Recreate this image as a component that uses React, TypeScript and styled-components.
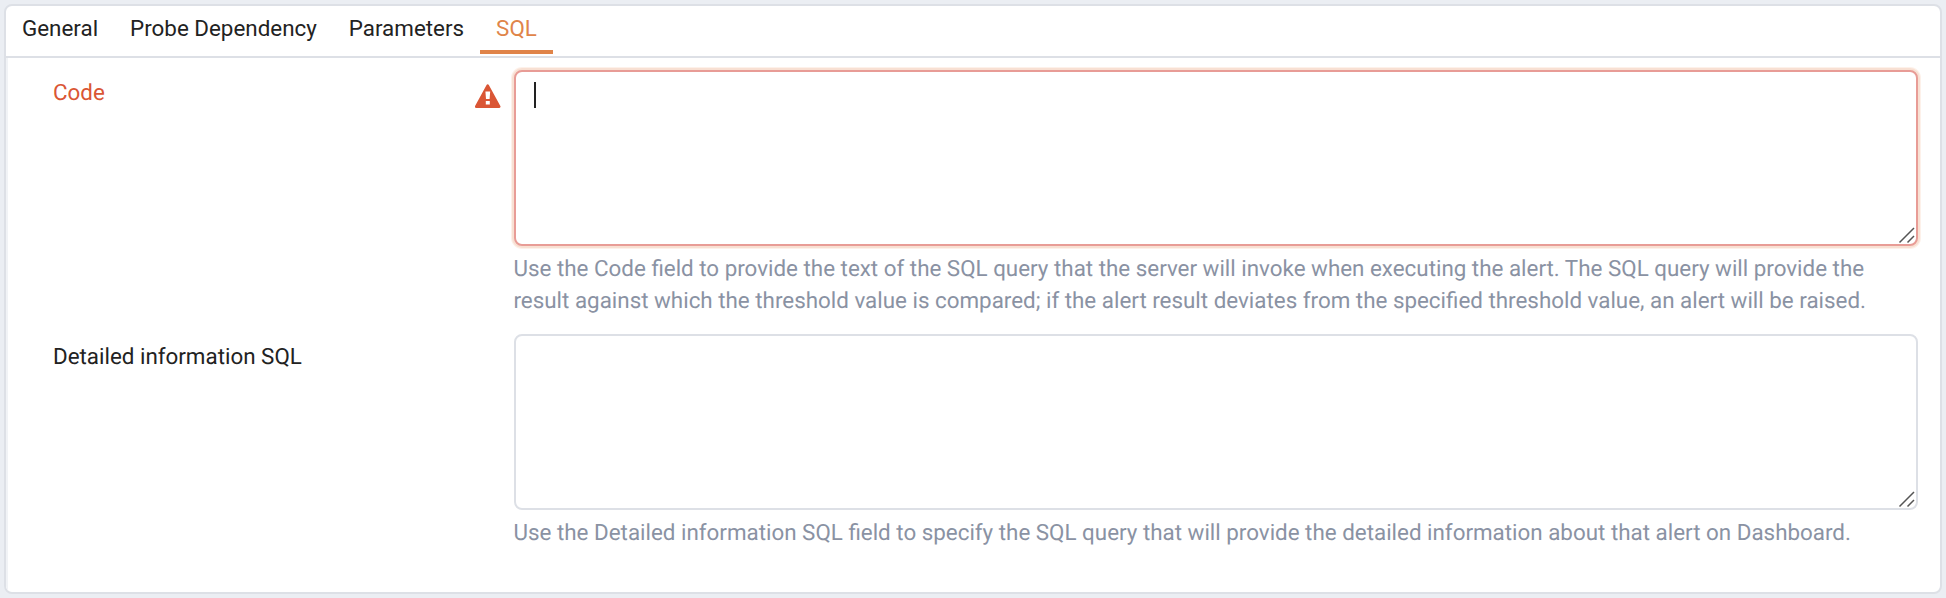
import React from "react";
import styled, { createGlobalStyle } from "styled-components";

const GlobalStyle = createGlobalStyle`
  *, *::before, *::after { box-sizing: border-box; }
  html, body { margin: 0; height: 100%; overflow: hidden; }
  body {
    background: #ebeef3;
    color: #222;
    font-family: Roboto, "Liberation Sans", sans-serif;
    font-size: 22.39px;
    text-rendering: geometricPrecision;
  }
`;

const Page = styled.main`
  height: 598px;
  padding: 4px;
`;

const Panel = styled.section`
  display: flex;
  flex-direction: column;
  height: 590px;
  border: 2px solid #dde0e6;
  border-radius: 8px;
  background: #fff;
  overflow: hidden;
`;

const TabBar = styled.nav`
  display: flex;
  flex: none;
  height: 52px;
  border-bottom: 2px solid #dde0e6;
`;

const Tab = styled.button<{ $active?: boolean }>`
  height: 48px;
  padding: 0 16px;
  border: 0;
  border-bottom: 4px solid ${(p) => (p.$active ? "#e08449" : "transparent")};
  background: none;
  color: ${(p) => (p.$active ? "#e08449" : "#222")};
  font: inherit;
  line-height: 44px;
  white-space: nowrap;
`;

const Form = styled.form`
  display: flex;
  flex: 1;
  flex-direction: column;
  gap: 17px;
  padding: 12px 22px 0 44px;
  border-left: 2px solid #f1f3f6;
`;

const Field = styled.div`
  display: grid;
  grid-template-columns: 462px 1404px;
`;

const LabelCell = styled.div<{ $error?: boolean }>`
  display: flex;
  justify-content: space-between;
  padding: 7px 13px 0 1px;
  color: ${(p) => (p.$error ? "#da5635" : "#222")};
  line-height: 32px;
`;

const WarningIcon = styled.svg`
  display: block;
  width: 26px;
  height: 24px;
  margin-top: 7px;
`;

const Editor = styled.div<{ $error?: boolean }>`
  position: relative;
  height: 176px;
  border: 2px solid ${(p) => (p.$error ? "#e89c96" : "#dde0e6")};
  border-radius: 8px;
  background: #fff;
  box-shadow: ${(p) => (p.$error ? "0 0 0 2px #f8e0d3, 0 0 0 3px #fdf1ea" : "none")};
`;

const TextArea = styled.textarea`
  display: block;
  width: 100%;
  height: 100%;
  padding: 10px 18px;
  border: 0;
  outline: 0;
  resize: none;
  background: transparent;
  color: inherit;
  font: inherit;
`;

const Caret = styled.span`
  position: absolute;
  top: 10px;
  left: 18px;
  width: 2px;
  height: 26px;
  background: #222;
`;

const Grip = styled.svg`
  position: absolute;
  right: 0;
  bottom: 0;
  width: 18px;
  height: 18px;
`;

const Help = styled.p`
  margin: 7px 0 0 -0.5px;
  color: #8a92a3;
  line-height: 32px;
  white-space: nowrap;
`;

const tabs = ["General", "Probe Dependency", "Parameters", "SQL"];

const fields = [
  {
    label: "Code",
    error: true,
    help: [
      "Use the Code field to provide the text of the SQL query that the server will invoke when executing the alert. The SQL query will provide the",
      "result against which the threshold value is compared; if the alert result deviates from the specified threshold value, an alert will be raised.",
    ],
  },
  {
    label: "Detailed information SQL",
    error: false,
    help: [
      "Use the Detailed information SQL field to specify the SQL query that will provide the detailed information about that alert on Dashboard.",
    ],
  },
];

export default function App() {
  return (
    <>
      <GlobalStyle />
      <Page>
        <Panel>
          <TabBar>
            {tabs.map((name) => (
              <Tab key={name} type="button" $active={name === "SQL"}>
                {name}
              </Tab>
            ))}
          </TabBar>
          <Form>
            {fields.map((field) => (
              <Field key={field.label}>
                <LabelCell $error={field.error}>
                  <span>{field.label}</span>
                  {field.error && (
                    <WarningIcon viewBox="0 0 26 24" fill="none">
                      <path
                        d="M12.7 1.6 24.2 22.6H1.2Z"
                        fill="#da5635"
                        stroke="#da5635"
                        strokeWidth="2.6"
                        strokeLinejoin="round"
                      />
                      <path d="M10.4 7.5h4.8l-.6 7.4h-3.6ZM10.8 17h4v3.5h-4Z" fill="#fff" />
                    </WarningIcon>
                  )}
                </LabelCell>
                <div>
                  <Editor $error={field.error}>
                    <TextArea aria-label={field.label} />
                    {field.error && <Caret />}
                    <Grip viewBox="0 0 18 18" stroke="#555" strokeWidth="1.5">
                      <path d="M1.5 16.5 16 2M9.5 16.5 16 10" />
                    </Grip>
                  </Editor>
                  <Help>
                    {field.help.map((line) => (
                      <React.Fragment key={line}>
                        {line}
                        <br />
                      </React.Fragment>
                    ))}
                  </Help>
                </div>
              </Field>
            ))}
          </Form>
        </Panel>
      </Page>
    </>
  );
}
